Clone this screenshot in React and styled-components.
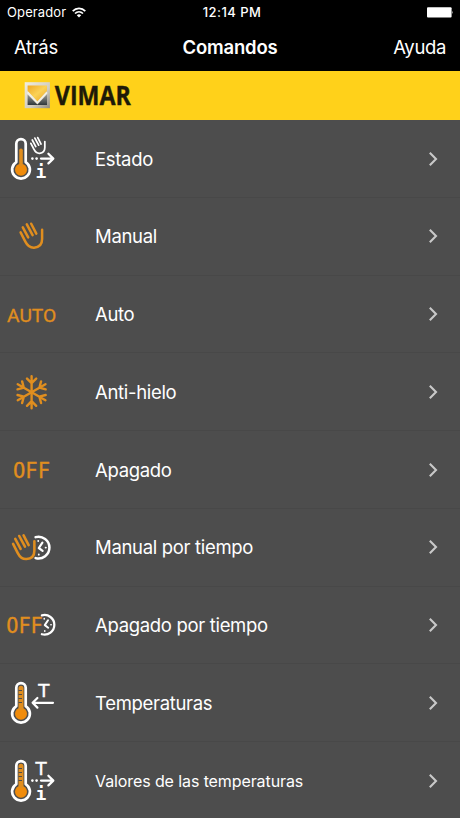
import React from 'react';
import styled, { createGlobalStyle } from 'styled-components';

const ORANGE = '#e08e1f';
const GREY = '#4d4d4d';

const GlobalStyle = createGlobalStyle`
  html, body {
    margin: 0;
    background: ${GREY};
    overflow: hidden;
  }
  * {
    box-sizing: border-box;
  }
`;

const Screen = styled.div`
  width: 460px;
  height: 818px;
  overflow: hidden;
  background: ${GREY};
  color: #fff;
  font-family: Inter, 'Liberation Sans', sans-serif;
`;

const Header = styled.header`
  height: 71px;
  background: #000;
`;

const StatusBar = styled.div`
  display: grid;
  grid-template-columns: 1fr auto 1fr;
  align-items: center;
  height: 24px;
  padding: 0 6px 0 7px;
  font-size: 13px;
  line-height: 24px;
`;

const Carrier = styled.span`
  display: flex;
  align-items: center;
  gap: 6px;
  letter-spacing: 0.12px;
`;

const Clock = styled.span`
  padding-left: 3px;
  font-weight: 500;
  letter-spacing: 0.45px;
`;

const Battery = styled.svg`
  justify-self: end;
`;

const NavBar = styled.nav`
  display: grid;
  grid-template-columns: 1fr auto 1fr;
  align-items: center;
  height: 47px;
  padding: 0 14px;
  line-height: 47px;
`;

const NavButton = styled.a`
  justify-self: ${p => p.$side};
  font-size: 18.5px;
  letter-spacing: -0.35px;
`;

const Title = styled.h1`
  margin: 0;
  font-size: 18.5px;
  font-weight: 600;
  letter-spacing: -0.2px;
`;

const Brand = styled.div`
  display: flex;
  height: 49px;
  background: #ffd11a;
`;

const List = styled.ul`
  margin: 0;
  padding: 0;
  list-style: none;
`;

const Row = styled.li`
  display: flex;
  align-items: center;
  height: 77.76px;
  padding: 0.6px 22px 0 0;
  border-bottom: 1px solid #484848;
`;

const IconBox = styled.svg`
  flex: none;
  width: 70px;
  height: 78px;
`;

const Label = styled.span`
  flex: 1;
  padding-left: 25px;
  font-size: ${p => p.$size || 18.5}px;
  letter-spacing: ${p => (p.$size ? -0.1 : -0.32)}px;
  white-space: nowrap;
`;

const Stroke = styled.g`
  fill: none;
  stroke: ${p => p.$color || '#fff'};
  stroke-width: ${p => p.$width || 2};
  stroke-linecap: ${p => p.$cap || 'round'};
  stroke-linejoin: round;
`;

const Caption = styled.text`
  fill: ${p => p.$color || '#fff'};
  font-family: ${p => p.$font || "'DejaVu Sans'"}, 'Liberation Sans', sans-serif;
  font-size: ${p => p.$size}px;
  font-weight: ${p => p.$weight || 400};
`;

function Hand({ color, width = 2.6, transform }) {
  return (
    <Stroke $color={color} $width={width} transform={transform}>
      <path d="M1 9.4 L5.6 18.4 C7.6 22.4 10.5 24.9 14.5 24.7 C19.3 24.4 22.5 21.5 22.5 16 V6.8" />
      <path d="M3.2 4.3 L8.6 14.4 M7.2 1.4 L13 12.2 M11.6 0.7 L16.7 10.6" />
    </Stroke>
  );
}

function Thermometer({ scale }) {
  return (
    <g>
      <Stroke $width={2.7}>
        <path d="M16.3 42.1 V23.8 a4.7 4.7 0 0 1 9.4 0 V42.1 a8.9 8.9 0 1 1 -9.4 0 Z" />
      </Stroke>
      <circle cx="21" cy="49.7" r="6" fill="#f08c0c" />
      {scale
        ? <g>
            <path d="M18.5 46 V24.2 a2.5 2.5 0 0 1 5 0 V46 Z" fill={ORANGE} />
            <path
              d="M18.5 26.5 H22 M18.5 30.5 H22 M18.5 34.5 H22 M18.5 38.5 H22"
              stroke={GREY}
              strokeWidth="1.2"
            />
          </g>
        : <path d="M19.2 46 V30.3 a1.8 1.8 0 0 1 3.6 0 V46 Z" fill={ORANGE} />}
    </g>
  );
}

function DottedArrow() {
  return (
    <g>
      <circle cx="32.4" cy="38.6" r="1.3" fill="#fff" />
      <circle cx="36.6" cy="38.6" r="1.3" fill="#fff" />
      <Stroke $width={2.3}>
        <path d="M41 38.6 H53.3 M48.4 33.8 L53.3 38.6 L48.4 43.4" />
      </Stroke>
    </g>
  );
}

function Info() {
  return (
    <Caption x="35.6" y="57.6" $size={18} $weight={700} $font="'DejaVu Sans Mono'">
      i
    </Caption>
  );
}

function HalfClock({ transform }) {
  return (
    <g transform={transform}>
      <Stroke $width={2.5}>
        <path d="M-3 -10.5 A10.9 10.9 0 1 1 -3 10.5" />
      </Stroke>
      <Stroke $width={2.2}>
        <path d="M3.8 -5 L0.2 0.4 L4 3.2" />
      </Stroke>
      <Stroke $width={1.8}>
        <path d="M-0.4 -6.8 v0.3 M0.2 6.8 v0.3 M7 0 h0.3" />
      </Stroke>
    </g>
  );
}

function Word({ x, y, width, size, font, children }) {
  return (
    <Caption
      x={x}
      y={y}
      textLength={width}
      lengthAdjust="spacingAndGlyphs"
      $color={ORANGE}
      $size={size}
      $font={font || "'DejaVu Sans Mono'"}
      stroke={ORANGE}
      strokeWidth="0.3"
    >
      {children}
    </Caption>
  );
}

const icons = {
  status: (
    <g>
      <Thermometer />
      <Hand width={2.7} transform="translate(30.2 17.2) scale(.65)" />
      <DottedArrow />
      <Info />
    </g>
  ),
  manual: <Hand color={ORANGE} width={2.5} transform="translate(19.6 26)" />,
  auto: <Word x={7} y={47} width={49.3} size={19} font="Roboto">AUTO</Word>,
  frost: (
    <Stroke $color={ORANGE} $width={2.4} transform="translate(31.6 39.2)">
      {[0, 60, 120, 180, 240, 300].map(a =>
        <path key={a} transform={`rotate(${a})`} d="M0 0 V-16 M-4.6 -13.6 L0 -9 L4.6 -13.6" />
      )}
      <circle r="2" fill={ORANGE} stroke="none" />
    </Stroke>
  ),
  off: <Word x={13} y={46.6} width={37} size={20.8}>OFF</Word>,
  manualTimed: (
    <g>
      <HalfClock transform="translate(38.6 39.6)" />
      <Hand color={ORANGE} width={2.6} transform="translate(12.1 26.6) scale(.99)" />
    </g>
  ),
  offTimed: (
    <g>
      <HalfClock transform="translate(44.6 38.8) scale(.9)" />
      <Word x={6.2} y={47} width={36.6} size={20.8}>OFF</Word>
    </g>
  ),
  temps: (
    <g>
      <Thermometer scale />
      <Caption x="38.2" y="32.8" $size={18.2} stroke="#fff" strokeWidth="0.4">T</Caption>
      <Stroke $width={2.2}>
        <path d="M53 38.8 H33 M37.4 34 L32.6 38.8 L37.4 43.6" />
      </Stroke>
    </g>
  ),
  values: (
    <g>
      <Thermometer scale />
      <Caption x="35.6" y="33" $size={18.2} stroke="#fff" strokeWidth="0.4">T</Caption>
      <DottedArrow />
      <Info />
    </g>
  ),
};

const commands = [
  { icon: 'status', label: 'Estado' },
  { icon: 'manual', label: 'Manual' },
  { icon: 'auto', label: 'Auto' },
  { icon: 'frost', label: 'Anti-hielo' },
  { icon: 'off', label: 'Apagado' },
  { icon: 'manualTimed', label: 'Manual por tiempo' },
  { icon: 'offTimed', label: 'Apagado por tiempo' },
  { icon: 'temps', label: 'Temperaturas' },
  { icon: 'values', label: 'Valores de las temperaturas', size: 16 },
];

function Wifi() {
  return (
    <svg width="14" height="11" viewBox="0 0 14 11">
      <Stroke $width={1.7} $cap="butt">
        <path d="M0.7 4.1 C4.3 0.4 9.7 0.4 13.3 4.1" />
        <path d="M3 6.5 C5.3 4.2 8.7 4.2 11 6.5" />
      </Stroke>
      <path d="M4.8 8.2 C6.1 7 7.9 7 9.2 8.2 L7 10.6 Z" fill="#fff" />
    </svg>
  );
}

function Logo() {
  return (
    <svg width="140" height="49" viewBox="0 0 140 49">
      <defs>
        <linearGradient id="frame" x1="0" y1="0" x2="1" y2="1">
          <stop offset="0" stopColor="#f1eee2" />
          <stop offset="0.6" stopColor="#d0ccbf" />
          <stop offset="1" stopColor="#8f8b80" />
        </linearGradient>
        <linearGradient id="gold" x1="0" y1="0" x2="1" y2="1">
          <stop offset="0" stopColor="#f0a722" />
          <stop offset="0.5" stopColor="#fbd257" />
          <stop offset="1" stopColor="#eda41e" />
        </linearGradient>
        <linearGradient id="steel" x1="0" y1="0" x2="0" y2="1">
          <stop offset="0" stopColor="#9a9a94" />
          <stop offset="1" stopColor="#30383b" />
        </linearGradient>
      </defs>
      <rect x="24.7" y="11.2" width="25.2" height="26" fill="url(#frame)" />
      <path d="M27.6 14.4 H47 V20 L37.4 30.6 L27.6 20 Z" fill="url(#gold)" />
      <path d="M27.6 23.4 L37.4 33.4 L47 23.4 V34 H27.6 Z" fill="url(#steel)" />
      <path d="M27.6 21.4 L37.4 31.8 L47 21.4" fill="none" stroke="#f3f0e4" strokeWidth="1.7" />
      <Caption
        x="54.8"
        y="33.7"
        textLength="76"
        lengthAdjust="spacingAndGlyphs"
        stroke="#1e1a08"
        strokeWidth="0.4"
        $color="#1e1a08"
        $font="'Open Sans'"
        $size={26.3}
        $weight={700}
      >
        VIMAR
      </Caption>
    </svg>
  );
}

function Chevron() {
  return (
    <svg width="10" height="16" viewBox="0 0 10 16">
      <path d="M1.8 1.8 L8 8 L1.8 14.2" fill="none" stroke="#c9c9c9" strokeWidth="2.1" />
    </svg>
  );
}

export default function App() {
  return (
    <Screen>
      <GlobalStyle />
      <Header>
        <StatusBar>
          <Carrier>
            Operador
            <Wifi />
          </Carrier>
          <Clock>12:14 PM</Clock>
          <Battery width="27" height="11" viewBox="0 0 27 11">
            <rect x="0" y="0.3" width="24.6" height="10.2" rx="1" fill="#fff" />
            <path d="M25.3 3.8 q1.3 1.6 0 3.2 Z" fill="#fff" />
          </Battery>
        </StatusBar>
        <NavBar>
          <NavButton $side="start">Atrás</NavButton>
          <Title>Comandos</Title>
          <NavButton $side="end">Ayuda</NavButton>
        </NavBar>
      </Header>
      <Brand>
        <Logo />
      </Brand>
      <List>
        {commands.map(({ icon, label, size }) =>
          <Row key={icon}>
            <IconBox viewBox="0 0 70 78">{icons[icon]}</IconBox>
            <Label $size={size}>{label}</Label>
            <Chevron />
          </Row>
        )}
      </List>
    </Screen>
  );
}
